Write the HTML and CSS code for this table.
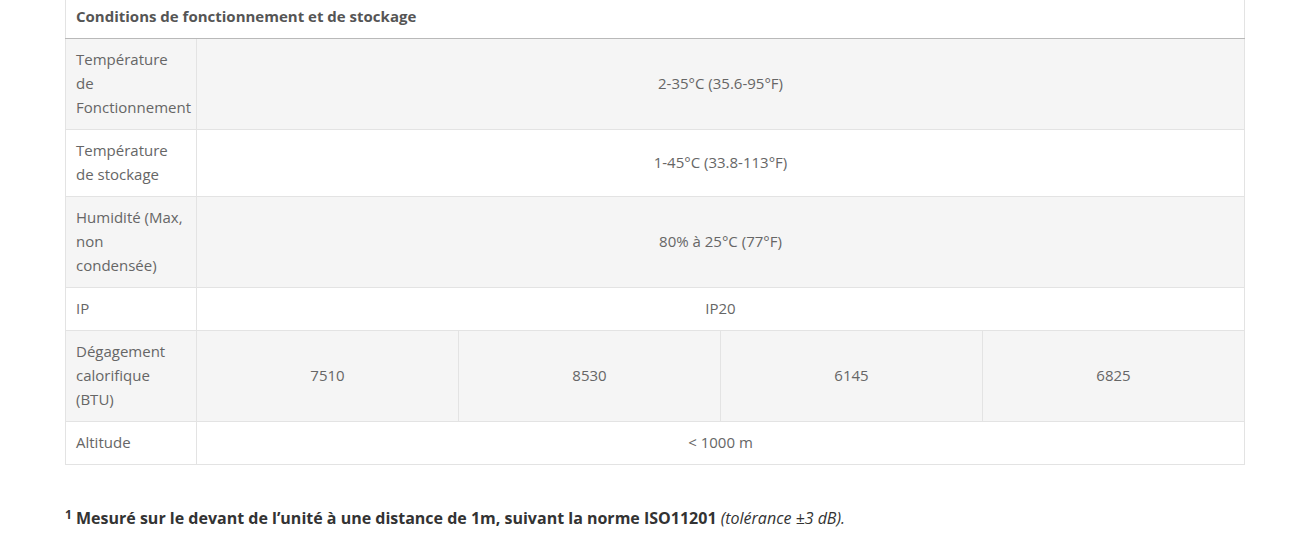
FILE: index.html
```html
<!DOCTYPE html>
<html lang="fr">
<head>
<meta charset="utf-8">
<link rel="stylesheet" href="styles.css">
</head>
<body>
<div class="wrap">
<table class="spec">
  <colgroup>
    <col class="c-label">
    <col class="c-val"><col class="c-val"><col class="c-val"><col class="c-val">
  </colgroup>
  <thead>
    <tr><th colspan="5">Conditions de fonctionnement et de stockage</th></tr>
  </thead>
  <tbody>
    <tr class="odd"><td class="label">Température de Fonctionnement</td><td colspan="4">2-35°C (35.6-95°F)</td></tr>
    <tr><td class="label">Température de stockage</td><td colspan="4">1-45°C (33.8-113°F)</td></tr>
    <tr class="odd"><td class="label">Humidité (Max, non condensée)</td><td colspan="4">80% à 25°C (77°F)</td></tr>
    <tr><td class="label">IP</td><td colspan="4">IP20</td></tr>
    <tr class="odd"><td class="label">Dégagement calorifique (BTU)</td><td>7510</td><td>8530</td><td>6145</td><td>6825</td></tr>
    <tr><td class="label">Altitude</td><td colspan="4">&lt; 1000 m</td></tr>
  </tbody>
</table>
<p class="note"><sup>1</sup> Mesuré sur le devant de l’unité à une distance de 1m, suivant la norme ISO11201 <em>(tolérance ±3 dB).</em></p>
</div>
</body>
</html>
```

FILE: styles.css
```css
html, body {
  margin: 0;
  padding: 0;
  background: #fff;
}
body {
  font-family: "Open Sans", "Liberation Sans", sans-serif;
  font-size: 15px;
  color: #666;
}
.wrap {
  padding: 0 58px 0 65px;
}
.spec {
  width: 1180px;
  border-collapse: collapse;
  table-layout: fixed;
}
.c-label { width: 131px; }
.spec th {
  text-align: left;
  font-weight: 700;
  color: #555;
  line-height: 24px;
  padding: 4px 10px 10px;
  border-left: 1px solid #e3e3e3;
  border-right: 1px solid #e3e3e3;
  border-bottom: 1px solid #b9b9b9;
}
.spec td {
  border: 1px solid #e3e3e3;
  line-height: 24px;
  padding: 8px 10px 10px;
  text-align: center;
  vertical-align: middle;
}
.spec td.label {
  text-align: left;
}
.spec tr.odd td {
  background: #f5f5f5;
}
.note {
  margin: 41px 0 0;
  font-size: 16px;
  font-weight: 700;
  color: #333;
  line-height: 24px;
}
.note sup {
  font-size: 12px;
  vertical-align: 5px;
  line-height: 0;
}
.note em {
  font-weight: 400;
  font-style: italic;
}
```
